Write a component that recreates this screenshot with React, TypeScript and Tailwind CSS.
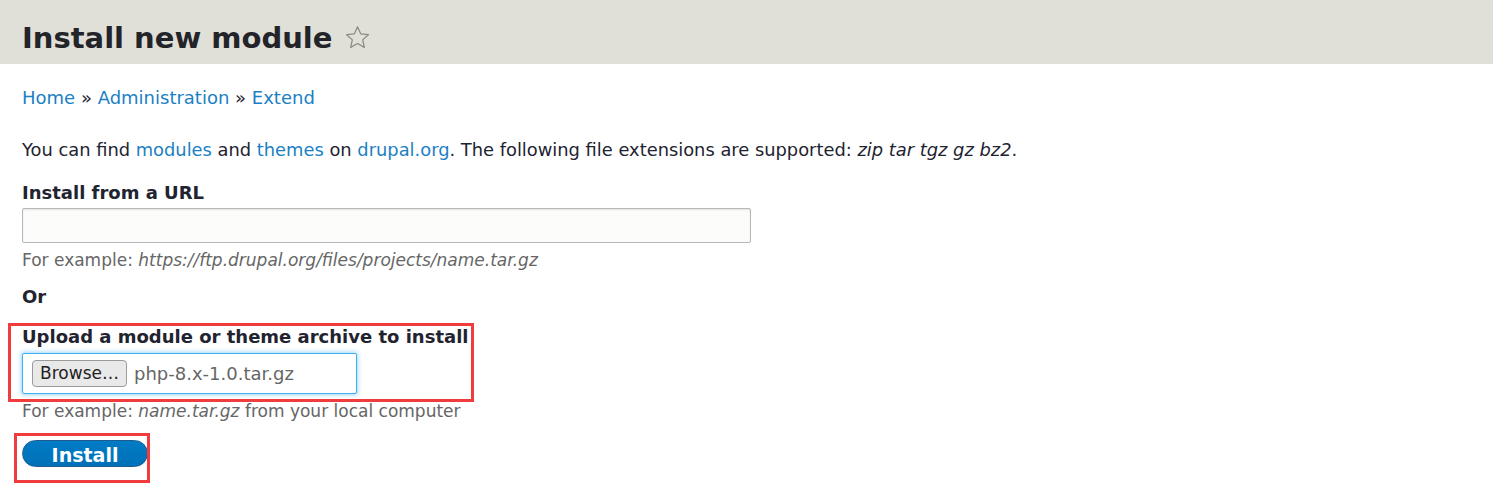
export default function App() {
  return (
    <div className="min-h-[497px] bg-white font-['DejaVu_Sans',sans-serif] text-[18px] text-[#222330]">
      <div className="flex h-[64px] items-center bg-[#e0e0d8] px-[22px] pt-[12px]">
        <h1 className="text-[29px] leading-none font-bold text-[#232429]">Install new module</h1>
        <svg
          className="mt-[-2px] ml-[12px] h-[27px] w-[27px]"
          viewBox="0 0 24 24"
          fill="none"
          stroke="#8a8a80"
          strokeWidth="1.1"
          strokeLinejoin="round"
        >
          <path d="M12 2.5l2.9 6.3 6.8.7-5.1 4.6 1.5 6.7L12 17.4l-6.1 3.4 1.5-6.7-5.1-4.6 6.8-.7z" />
        </svg>
      </div>

      <div className="px-[22px]">
        <nav className="mt-[22px] leading-[24px] text-[#1b7fc4]">
          <a href="#">Home</a> <span className="text-[#222330]">»</span> <a href="#">Administration</a>{' '}
          <span className="text-[#222330]">»</span> <a href="#">Extend</a>
        </nav>

        <p className="mt-[28px] text-[17.85px] leading-[24px]">
          You can find <a href="#" className="text-[#1b7fc4]">modules</a> and{' '}
          <a href="#" className="text-[#1b7fc4]">themes</a> on{' '}
          <a href="#" className="text-[#1b7fc4]">drupal.org</a>. The following file extensions are supported:{' '}
          <em>zip tar tgz gz bz2</em>.
        </p>

        <label className="mt-[19px] block leading-[24px] font-bold">Install from a URL</label>
        <input
          type="text"
          className="mt-[3px] block h-[35px] w-[729px] rounded-[2px] border border-[#b8b8b8] bg-[#fcfcfa] shadow-[inset_0_1px_2px_rgba(0,0,0,0.1)] outline-none"
        />
        <div className="mt-[5px] text-[17px] leading-[24px] text-[#666]">
          For example: <em>https://ftp.drupal.org/files/projects/name.tar.gz</em>
        </div>

        <div className="mt-[13px] leading-[24px] font-bold">Or</div>

        <div className="relative mt-[16px]">
          <span className="pointer-events-none absolute top-[-2px] left-[-14px] h-[79px] w-[466px] border-[3px] border-[#f03c3c]" />
          <label className="block leading-[24px] font-bold">Upload a module or theme archive to install</label>
          <div className="mt-[4px] flex h-[41px] w-[335px] items-center rounded-[2px] border border-[#40b0f0] bg-white pl-[9px] shadow-[0_0_4px_1px_rgba(64,176,240,0.5)]">
            <span className="flex h-[27px] w-[95px] items-center justify-center rounded-[4px] border border-[#9a9a9a] bg-[#e9e9e9] text-[17px] text-[#222]">
              Browse…
            </span>
            <span className="ml-[7px] text-[18px] text-[#666]">php-8.x-1.0.tar.gz</span>
          </div>
        </div>
        <div className="mt-[5px] text-[17px] leading-[24px] text-[#666]">
          For example: <em>name.tar.gz</em> from your local computer
        </div>

        <div className="relative mt-[17px] inline-block">
          <span className="pointer-events-none absolute top-[-7px] left-[-8px] h-[50px] w-[136px] border-[3px] border-[#f03c3c]" />
          <button
            type="button"
            className="flex h-[27px] w-[126px] items-center justify-center rounded-full border border-[#1e5c90] bg-gradient-to-b from-[#007bc6] to-[#0071b8] pt-[3px] text-[19px] font-bold text-white"
          >
            Install
          </button>
        </div>
      </div>
    </div>
  )
}
